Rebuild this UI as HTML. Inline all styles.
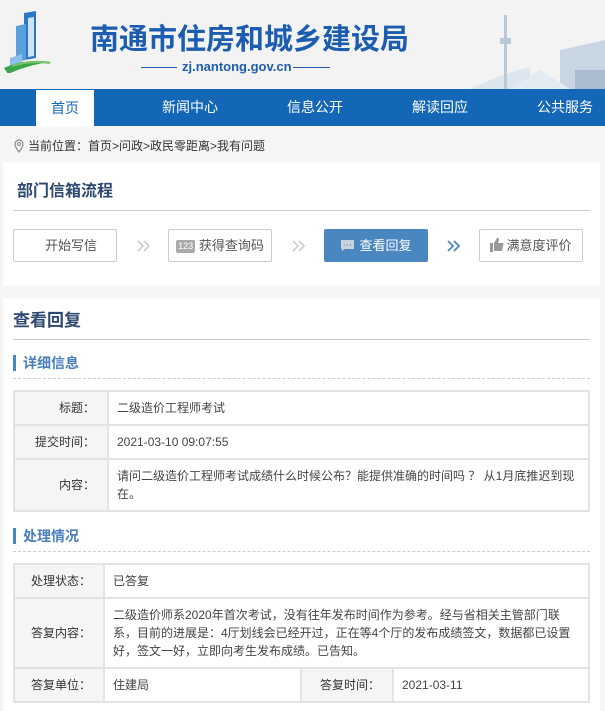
<!DOCTYPE html>
<html><head><meta charset="utf-8"><style>
*{margin:0;padding:0;box-sizing:border-box}
body{width:605px;height:711px;overflow:hidden;background:#f5f5f5;font-family:"Liberation Sans","Noto Sans CJK SC",sans-serif;font-size:12px;color:#333;position:relative}
.abs{position:absolute}
.hdr{left:0;top:0;width:605px;height:89px;background:#f3f3f3}
.nav{left:0;top:89px;width:605px;height:37px;background:#1467b7}
.nav span{position:absolute;top:0;height:37px;line-height:37px;color:#fff;font-size:14px;text-align:center;width:100px;margin-left:-50px}
.nav .on{background:#fff;color:#1467b7;width:58px;margin-left:0;left:36px;top:1px}
.box{background:#fff;left:3px;width:597px}
.btn{top:229px;height:33px;border:1px solid #ccc;border-radius:2px;line-height:31px;text-align:center;color:#555;font-size:13px;width:104px;background:#fff;white-space:nowrap}
.chev{top:240px}
.sec{left:13px;height:16px;border-left:3px solid #4a86c0;padding-left:7px;font-size:14px;font-weight:bold;color:#4a7fbe;line-height:16px}
.dash{left:13px;width:577px;border-top:1px dashed #ccc}
table{position:absolute;left:13px;width:577px;border-collapse:collapse;font-size:12px;table-layout:fixed}
td{border:2px solid #e3e3e3;padding:0 8px 0 8px;color:#444;line-height:18px}
td.l{background:#f5f5f5;text-align:right;padding:0 12px 0 0;color:#333;white-space:nowrap}
</style></head><body>
<div class="abs hdr"></div>
<svg class="abs" style="left:0;top:8px" width="60" height="65" viewBox="0 0 60 65">
<path d="M24 5 L36 3 L36 50 L24 52Z" fill="#2b78c4"/><path d="M28 10 L34 9 L34 48 L28 49Z" fill="#cfe3f5"/>
<path d="M16 18 L26 16 L26 52 L16 54Z" fill="#5aa0dc"/><path d="M10 50 L22 46 L22 58 L10 60Z" fill="#8cc0ea"/>
<path d="M4 60 Q25 50 52 54 Q30 56 8 66Z" fill="#3aa64a"/><path d="M12 58 Q30 52 50 55" stroke="#7dc36b" stroke-width="2" fill="none"/>
</svg>
<div class="abs" style="left:90px;top:17px;font-size:29px;font-weight:bold;color:#1d5db0;letter-spacing:0px;font-family:'Noto Sans CJK SC',sans-serif;line-height:40px;white-space:nowrap">南通市住房和城乡建设局</div>
<div class="abs" style="left:141px;top:67px;width:36px;border-top:1px solid #1d5db0"></div>
<div class="abs" style="left:182px;top:58px;font-size:13px;color:#1d5db0;font-weight:bold;line-height:17px">zj.nantong.gov.cn</div>
<div class="abs" style="left:293px;top:67px;width:37px;border-top:1px solid #1d5db0"></div>
<svg class="abs" style="left:470px;top:10px" width="135" height="79" viewBox="0 0 135 79">
<path d="M0 79 Q40 60 60 58 L60 79Z" fill="#dde6ef"/><rect x="34" y="5" width="3" height="74" fill="#b8c9da"/><rect x="30" y="28" width="11" height="6" fill="#b8c9da"/>
<path d="M90 68 L90 40 L135 30 L135 79 L90 79Z" fill="#c8d6e4"/><rect x="105" y="60" width="30" height="19" fill="#aabdd0"/>
<path d="M40 79 L70 60 L100 79Z" fill="#e4ebf2"/></svg>
<div class="abs nav">
<span class="on">首页</span><span style="left:190px">新闻中心</span><span style="left:315px">信息公开</span><span style="left:440px">解读回应</span><span style="left:565px">公共服务</span></div>
<svg class="abs" style="left:14px;top:139px" width="10" height="14" viewBox="0 0 10 14"><path d="M5 13 C1 8 1 6 1 5 A4 4 0 0 1 9 5 C9 6 9 8 5 13Z" fill="none" stroke="#888" stroke-width="1.2"/><circle cx="5" cy="5" r="1.5" fill="none" stroke="#888"/></svg>
<div class="abs" style="left:28px;top:138px;font-size:12px;color:#333;line-height:16px">当前位置：首页&gt;问政&gt;政民零距离&gt;我有问题</div>

<div class="abs box" style="top:162px;height:124px"></div>
<div class="abs" style="left:17px;top:181px;font-size:16px;font-weight:bold;color:#2c4770;line-height:22px">部门信箱流程</div>
<div class="abs" style="left:13px;top:210px;width:577px;border-top:1px solid #ccc"></div>
<div class="abs btn" style="left:13px;padding-left:12px">开始写信</div>
<svg class="abs chev" style="left:137px" width="14" height="12" viewBox="0 0 14 12"><path d="M1 1 L6 6 L1 11 M7 1 L12 6 L7 11" fill="none" stroke="#ccc" stroke-width="1.6"/></svg>
<div class="abs btn" style="left:168px"><span style="display:inline-block;background:#aaa;color:#fff;font-size:9px;line-height:13px;padding:0 2px;border-radius:2px;vertical-align:1px">123</span> 获得查询码</div>
<svg class="abs chev" style="left:292px" width="14" height="12" viewBox="0 0 14 12"><path d="M1 1 L6 6 L1 11 M7 1 L12 6 L7 11" fill="none" stroke="#ccc" stroke-width="1.6"/></svg>
<div class="abs btn" style="left:324px;background:#4a86c0;border-color:#4a86c0;color:#fff"><svg width="15" height="13" viewBox="0 0 15 13" style="vertical-align:-2px;margin-right:4px"><path d="M1 1 H14 V10 H5 L2 12 V10 H1Z" fill="#c9d3de"/><path d="M4 6 H5 M7 6 H8 M10 6 H11" stroke="#4a86c0" stroke-width="1"/></svg>查看回复</div>
<svg class="abs chev" style="left:447px" width="14" height="12" viewBox="0 0 14 12"><path d="M1 1 L6 6 L1 11 M7 1 L12 6 L7 11" fill="none" stroke="#4a86c0" stroke-width="1.8"/></svg>
<div class="abs btn" style="left:479px"><svg width="14" height="15" viewBox="0 0 14 15" style="vertical-align:-2px;margin-right:2px"><rect x="0" y="6" width="3" height="9" fill="#999"/><path d="M4 6 L7 1 Q9 0 9 3 L8 6 H13 Q14 7 13 9 L12 14 H4Z" fill="#999"/></svg>满意度评价</div>

<div class="abs box" style="top:298px;height:413px"></div>
<div class="abs" style="left:13px;top:309px;font-size:17px;font-weight:bold;color:#2c4770;line-height:24px">查看回复</div>
<div class="abs" style="left:13px;top:339px;width:577px;border-top:1px solid #ccc"></div>
<div class="abs sec" style="top:355px">详细信息</div>
<div class="abs dash" style="top:378px"></div>
<table style="top:390px">
<colgroup><col style="width:94px"><col></colgroup>
<tr style="height:34px"><td class="l">标题：</td><td>二级造价工程师考试</td></tr>
<tr style="height:34px"><td class="l">提交时间：</td><td>2021-03-10 09:07:55</td></tr>
<tr style="height:52px"><td class="l">内容：</td><td>请问二级造价工程师考试成绩什么时候公布？能提供准确的时间吗 ？ 从1月底推迟到现在。</td></tr>
</table>
<div class="abs sec" style="top:528px">处理情况</div>
<div class="abs dash" style="top:551px"></div>
<table style="top:563px">
<colgroup><col style="width:90px"><col style="width:197px"><col style="width:92px"><col></colgroup>
<tr style="height:34px"><td class="l">处理状态：</td><td colspan="3">已答复</td></tr>
<tr style="height:70px"><td class="l">答复内容：</td><td colspan="3" style="padding-right:12px">二级造价师系2020年首次考试，没有往年发布时间作为参考。经与省相关主管部门联系，目前的进展是：4厅划线会已经开过，正在等4个厅的发布成绩签文，数据都已设置好，签文一好，立即向考生发布成绩。已告知。</td></tr>
<tr style="height:34px"><td class="l">答复单位：</td><td>住建局</td><td class="l">答复时间：</td><td>2021-03-11</td></tr>
</table>
</body></html>
